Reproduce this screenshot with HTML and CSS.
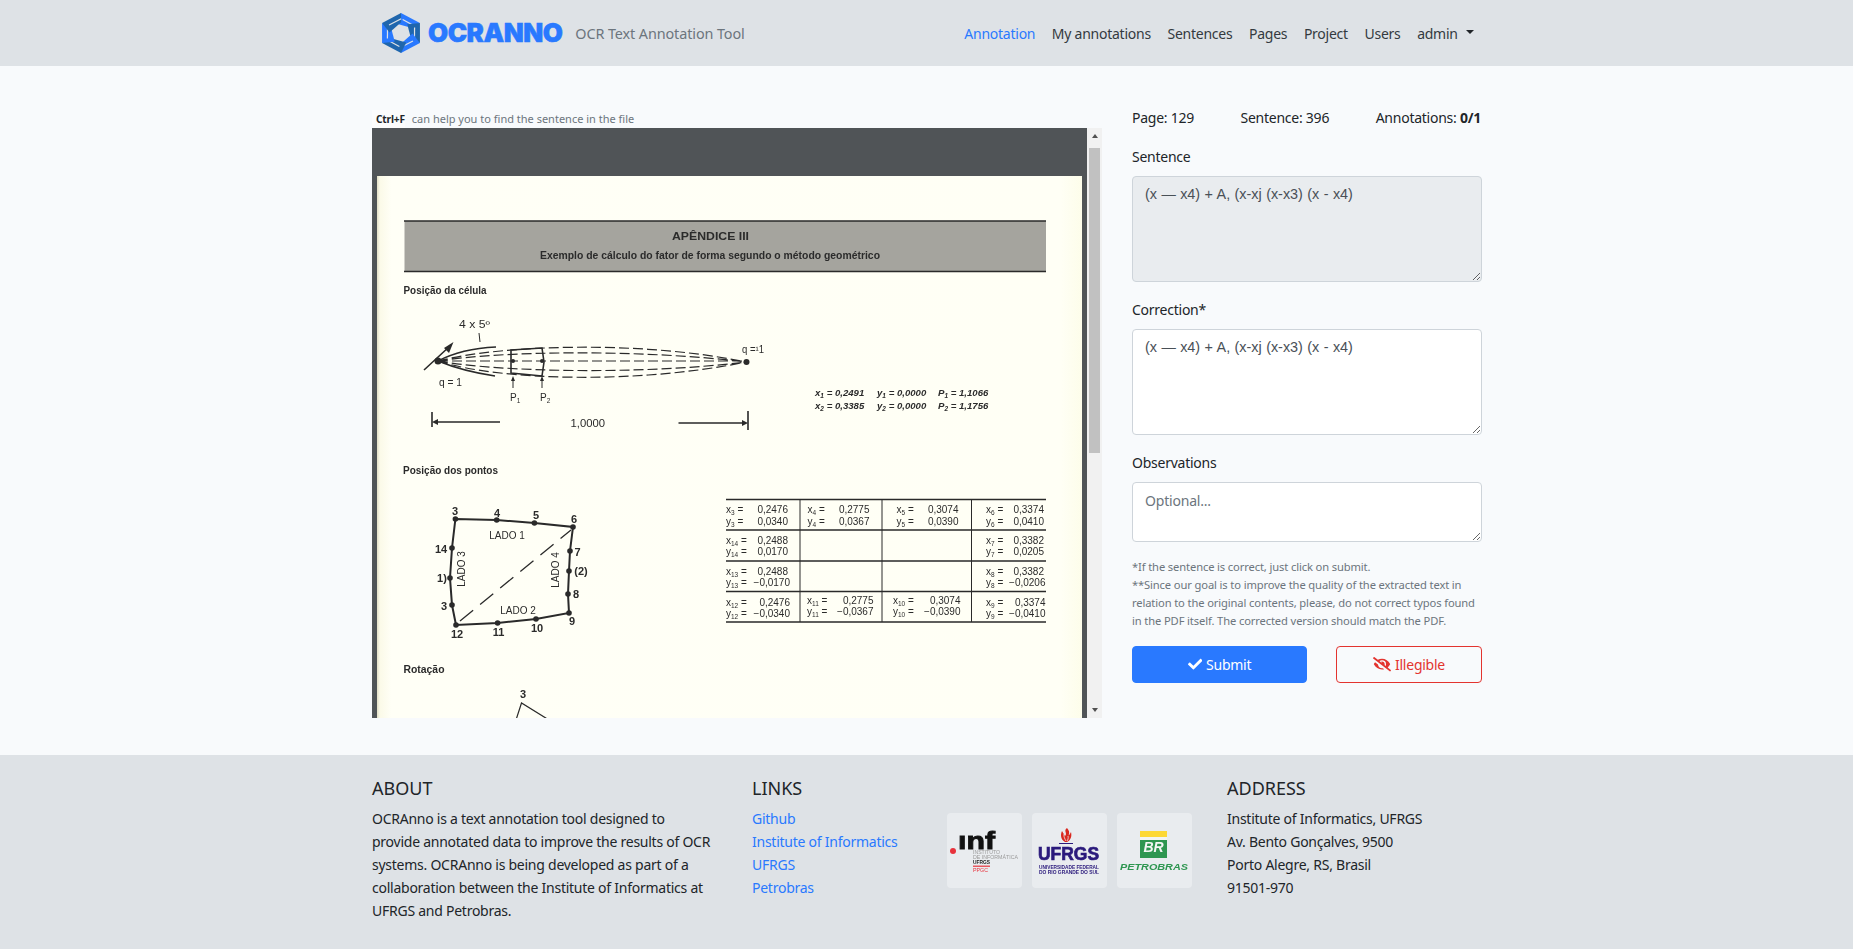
FILE: index.html
```html
<!DOCTYPE html>
<html lang="en">
<head>
<meta charset="utf-8">
<title>OCRAnno</title>
<link rel="stylesheet" href="styles.css">
</head>
<body>
<header class="topbar">
  <div class="wrap topbar-row">
    <a class="brand">
      <svg class="brand-mark" viewBox="-17.400 -20 34.800 40" preserveAspectRatio="none" aria-hidden="true">
        <g><path class="hex-light" d="M0 -20L17.320 -10L9.300 -5.200L-4.800 -9.400Z"/><path class="hex-slit" d="M12.500 -7L1.500 -13.500"/></g>
        <g transform="rotate(60)"><path class="hex-dark" d="M0 -20L17.320 -10L9.300 -5.200L-4.800 -9.400Z"/><path class="hex-slit" d="M12.500 -7L1.500 -13.500"/></g>
        <g transform="rotate(120)"><path class="hex-light" d="M0 -20L17.320 -10L9.300 -5.200L-4.800 -9.400Z"/><path class="hex-slit" d="M12.500 -7L1.500 -13.500"/></g>
        <g transform="rotate(180)"><path class="hex-dark" d="M0 -20L17.320 -10L9.300 -5.200L-4.800 -9.400Z"/><path class="hex-slit" d="M12.500 -7L1.500 -13.500"/></g>
        <g transform="rotate(240)"><path class="hex-light" d="M0 -20L17.320 -10L9.300 -5.200L-4.800 -9.400Z"/><path class="hex-slit" d="M12.500 -7L1.500 -13.500"/></g>
        <g transform="rotate(300)"><path class="hex-dark" d="M0 -20L17.320 -10L9.300 -5.200L-4.800 -9.400Z"/><path class="hex-slit" d="M12.500 -7L1.500 -13.500"/></g>
      </svg>
      <span class="brand-word">OCRANNO</span>
    </a>
    <span class="tagline">OCR Text Annotation Tool</span>
    <nav class="nav">
      <a class="nav-link active">Annotation</a>
      <a class="nav-link">My annotations</a>
      <a class="nav-link">Sentences</a>
      <a class="nav-link">Pages</a>
      <a class="nav-link">Project</a>
      <a class="nav-link">Users</a>
      <a class="nav-link">admin<span class="caret"></span></a>
    </nav>
  </div>
</header>

<main class="wrap layout">
  <section class="doc">
    <p class="doc-hint"><kbd class="key">Ctrl+F</kbd><span>can help you to find the sentence in the file</span></p>
    <div class="viewer">
      <svg class="page" viewBox="372 128 715 590" aria-label="PDF page">
        <defs>
          <linearGradient id="edge" x1="0" x2="1" y1="0" y2="0">
            <stop offset="0" stop-color="#e2dfc6"/>
            <stop offset="0.004" stop-color="#fbfae8"/>
            <stop offset="0.02" stop-color="#fffff6"/>
            <stop offset="0.97" stop-color="#fffff5"/>
            <stop offset="1" stop-color="#fdfdea"/>
          </linearGradient>
        </defs>
        <rect class="sheet" x="377" y="176" width="705" height="542"/>
        <g class="scan">
          <rect class="band" x="404.500" y="221" width="641.500" height="51"/>
          <path class="rule" d="M404 221H1046M404 271.500H1046"/>
          <text class="b" x="672" y="240" textLength="77" lengthAdjust="spacingAndGlyphs">APÊNDICE  III</text>
          <text class="b" x="540" y="258.500" textLength="340" lengthAdjust="spacingAndGlyphs">Exemplo de cálculo do fator de forma segundo o método geométrico</text>
          <text class="b" x="403.500" y="293.500" textLength="83" lengthAdjust="spacingAndGlyphs">Posição da célula</text>

          <text class="t" x="459" y="328" textLength="31" lengthAdjust="spacingAndGlyphs">4 x 5º</text>
          <path class="thin" d="M479 333L480 342"/>
          <path class="solid" d="M424 370L450 346M438 361C455 352 475 348 496 347M438 361C455 368 475 373 495 376"/>
          <path class="arrowhead" d="M453.500 342L444 348L449 353Z"/>
          <path class="dash" d="M438 361C500 345 640 340 746 362M438 361C500 351 640 349 746 362M438 361H746M438 361C500 372 640 375 746 362M438 361C500 381 640 384 746 362"/>
          <path class="solid" d="M511 350L542 348L544 362L542 376L511 373Z"/>
          <circle class="dot" cx="513" cy="361" r="2"/><circle class="dot" cx="542" cy="361" r="2"/><circle class="dot" cx="746.500" cy="362" r="3"/><circle class="dot" cx="438" cy="361" r="3.500"/>
          <text class="t" x="439" y="386" textLength="23" lengthAdjust="spacingAndGlyphs">q = 1</text>
          <text class="t" x="742" y="353" textLength="22" lengthAdjust="spacingAndGlyphs">q =¹1</text>
          <path class="thin" d="M513 388V379M542 388V379"/>
          <path class="arrowhead" d="M513 376L511 381H515ZM542 376L540 381H544Z"/>
          <text class="t" x="510" y="401">P<tspan class="sub" dy="2">1</tspan></text>
          <text class="t" x="540" y="401">P<tspan class="sub" dy="2">2</tspan></text>
          <path class="solid" d="M432 412V427M434 422H500M678.500 423H746M748 411V430"/>
          <path class="arrowhead" d="M432 422L438 419V425ZM748 423L742 420V426Z"/>
          <text class="t" x="570.500" y="427" textLength="34.500" lengthAdjust="spacingAndGlyphs">1,0000</text>
          <text class="i" x="815" y="395.500">x<tspan class="sub" dy="2">1</tspan><tspan dy="-2"> = 0,2491</tspan></text>
          <text class="i" x="877" y="395.500">y<tspan class="sub" dy="2">1</tspan><tspan dy="-2"> = 0,0000</tspan></text>
          <text class="i" x="938" y="395.500">P<tspan class="sub" dy="2">1</tspan><tspan dy="-2"> = 1,1066</tspan></text>
          <text class="i" x="815" y="408.500">x<tspan class="sub" dy="2">2</tspan><tspan dy="-2"> = 0,3385</tspan></text>
          <text class="i" x="877" y="408.500">y<tspan class="sub" dy="2">2</tspan><tspan dy="-2"> = 0,0000</tspan></text>
          <text class="i" x="938" y="408.500">P<tspan class="sub" dy="2">2</tspan><tspan dy="-2"> = 1,1756</tspan></text>

          <text class="b" x="403" y="473.500" textLength="95" lengthAdjust="spacingAndGlyphs">Posição dos pontos</text>
          <path class="solid poly" d="M455.400 519L496.700 520L534.400 523L573 527L570 551L569 571L568 594L569 613L536 619L497.600 623L456 625L452 605L450 578L452 548Z"/>
          <path class="dash long" d="M460 621L571 530"/>
          <g class="dots">
            <circle class="dot" cx="455.400" cy="519" r="2.800"/><circle class="dot" cx="496.700" cy="520" r="2.800"/><circle class="dot" cx="534.400" cy="523" r="2.800"/><circle class="dot" cx="573" cy="527" r="2.800"/><circle class="dot" cx="570" cy="551" r="2.800"/><circle class="dot" cx="569" cy="571" r="2.800"/><circle class="dot" cx="568" cy="594" r="2.800"/><circle class="dot" cx="569" cy="613" r="2.800"/><circle class="dot" cx="536" cy="619" r="2.800"/><circle class="dot" cx="497.600" cy="623" r="2.800"/><circle class="dot" cx="456" cy="625" r="2.800"/><circle class="dot" cx="452" cy="605" r="2.800"/><circle class="dot" cx="450" cy="578" r="2.800"/><circle class="dot" cx="452" cy="548" r="2.800"/>
          </g>
          <text class="n" x="455" y="515">3</text><text class="n" x="497" y="517">4</text><text class="n" x="536" y="519">5</text><text class="n" x="574" y="523">6</text><text class="n" x="577.500" y="556">7</text><text class="n" x="581" y="575">(2)</text><text class="n" x="576" y="598">8</text><text class="n" x="572" y="625">9</text><text class="n" x="537" y="632">10</text><text class="n" x="498.600" y="636">11</text><text class="n" x="457" y="638">12</text><text class="n" x="444" y="610">3</text><text class="n" x="442" y="582">1)</text><text class="n" x="441" y="553">14</text>
          <text class="l" x="507" y="539">LADO 1</text>
          <text class="l" x="518" y="614">LADO 2</text>
          <text class="l" transform="rotate(-90 465 569)" x="465" y="569">LADO 3</text>
          <text class="l" transform="rotate(-90 559 570)" x="559" y="570">LADO 4</text>

          <path class="rule" d="M726 499.500H1046M726 530H1046M726 561H1046M726 591.500H1046M726 622H1046"/>
          <path class="thin" d="M800 499.500V622M882 499.500V622M971.500 499.500V622"/>
          <g class="cells">
            <text x="726" y="512.500">x<tspan class="sub" dy="2">3</tspan><tspan dy="-2"> =</tspan></text><text class="v" x="788" y="512.500">0,2476</text>
            <text x="726" y="524.500">y<tspan class="sub" dy="2">3</tspan><tspan dy="-2"> =</tspan></text><text class="v" x="788" y="524.500">0,0340</text>
            <text x="807.500" y="512.500">x<tspan class="sub" dy="2">4</tspan><tspan dy="-2"> =</tspan></text><text class="v" x="869.500" y="512.500">0,2775</text>
            <text x="807.500" y="524.500">y<tspan class="sub" dy="2">4</tspan><tspan dy="-2"> =</tspan></text><text class="v" x="869.500" y="524.500">0,0367</text>
            <text x="896.500" y="512.500">x<tspan class="sub" dy="2">5</tspan><tspan dy="-2"> =</tspan></text><text class="v" x="958.500" y="512.500">0,3074</text>
            <text x="896.500" y="524.500">y<tspan class="sub" dy="2">5</tspan><tspan dy="-2"> =</tspan></text><text class="v" x="958.500" y="524.500">0,0390</text>
            <text x="986" y="512.500">x<tspan class="sub" dy="2">6</tspan><tspan dy="-2"> =</tspan></text><text class="v" x="1044" y="512.500">0,3374</text>
            <text x="986" y="524.500">y<tspan class="sub" dy="2">6</tspan><tspan dy="-2"> =</tspan></text><text class="v" x="1044" y="524.500">0,0410</text>

            <text x="726" y="543.500">x<tspan class="sub" dy="2">14</tspan><tspan dy="-2"> =</tspan></text><text class="v" x="788" y="543.500">0,2488</text>
            <text x="726" y="555">y<tspan class="sub" dy="2">14</tspan><tspan dy="-2"> =</tspan></text><text class="v" x="788" y="555">0,0170</text>
            <text x="986" y="543.500">x<tspan class="sub" dy="2">7</tspan><tspan dy="-2"> =</tspan></text><text class="v" x="1044" y="543.500">0,3382</text>
            <text x="986" y="555">y<tspan class="sub" dy="2">7</tspan><tspan dy="-2"> =</tspan></text><text class="v" x="1044" y="555">0,0205</text>

            <text x="726" y="574.500">x<tspan class="sub" dy="2">13</tspan><tspan dy="-2"> =</tspan></text><text class="v" x="788" y="574.500">0,2488</text>
            <text x="726" y="586">y<tspan class="sub" dy="2">13</tspan><tspan dy="-2"> =</tspan></text><text class="v" x="790" y="586">−0,0170</text>
            <text x="986" y="574.500">x<tspan class="sub" dy="2">8</tspan><tspan dy="-2"> =</tspan></text><text class="v" x="1044" y="574.500">0,3382</text>
            <text x="986" y="586">y<tspan class="sub" dy="2">8</tspan><tspan dy="-2"> =</tspan></text><text class="v" x="1045.500" y="586">−0,0206</text>

            <text x="726" y="605.500">x<tspan class="sub" dy="2">12</tspan><tspan dy="-2"> =</tspan></text><text class="v" x="790" y="605.500">0,2476</text>
            <text x="726" y="617">y<tspan class="sub" dy="2">12</tspan><tspan dy="-2"> =</tspan></text><text class="v" x="790" y="617">−0,0340</text>
            <text x="807" y="603.500">x<tspan class="sub" dy="2">11</tspan><tspan dy="-2"> =</tspan></text><text class="v" x="873.500" y="603.500">0,2775</text>
            <text x="807" y="615">y<tspan class="sub" dy="2">11</tspan><tspan dy="-2"> =</tspan></text><text class="v" x="873.500" y="615">−0,0367</text>
            <text x="893" y="603.500">x<tspan class="sub" dy="2">10</tspan><tspan dy="-2"> =</tspan></text><text class="v" x="960.500" y="603.500">0,3074</text>
            <text x="893" y="615">y<tspan class="sub" dy="2">10</tspan><tspan dy="-2"> =</tspan></text><text class="v" x="960.500" y="615">−0,0390</text>
            <text x="986" y="605.500">x<tspan class="sub" dy="2">9</tspan><tspan dy="-2"> =</tspan></text><text class="v" x="1045.500" y="605.500">0,3374</text>
            <text x="986" y="617">y<tspan class="sub" dy="2">9</tspan><tspan dy="-2"> =</tspan></text><text class="v" x="1045.500" y="617">−0,0410</text>
          </g>

          <text class="b" x="403.500" y="672.500" textLength="41" lengthAdjust="spacingAndGlyphs">Rotação</text>
          <text class="n" x="523" y="698">3</text>
          <path class="thin wide" d="M516 720L521.500 703L549 720"/>
        </g>
      </svg>
      <div class="scrollbar" aria-hidden="true">
        <span class="sb-up"></span>
        <span class="sb-thumb"></span>
        <span class="sb-down"></span>
      </div>
    </div>
  </section>

  <aside class="panel">
    <div class="stats">
      <span>Page: 129</span>
      <span>Sentence: 396</span>
      <span>Annotations: <b>0/1</b></span>
    </div>
    <div class="field">
      <label class="label">Sentence</label>
      <textarea class="input tall" readonly>(x — x4) + A, (x-xj (x-x3) (x - x4)</textarea>
    </div>
    <div class="field">
      <label class="label">Correction*</label>
      <textarea class="input tall">(x — x4) + A, (x-xj (x-x3) (x - x4)</textarea>
    </div>
    <div class="field">
      <label class="label">Observations</label>
      <textarea class="input short" placeholder="Optional..."></textarea>
    </div>
    <p class="help">*If the sentence is correct, just click on submit.<br>**Since our goal is to improve the quality of the extracted text in relation to the original contents, please, do not correct typos found in the PDF itself. The corrected version should match the PDF.</p>
    <div class="actions">
      <button class="btn btn-primary" type="button">
        <svg class="ico" viewBox="0 0 512 512" aria-hidden="true"><path d="M173.898 439.404l-166.4-166.4c-9.997-9.997-9.997-26.206 0-36.204l36.203-36.204c9.997-9.998 26.207-9.998 36.204 0L192 312.69 432.095 72.596c9.997-9.997 26.207-9.997 36.204 0l36.203 36.204c9.997 9.997 9.997 26.206 0 36.204l-294.4 294.401c-9.998 9.997-26.207 9.997-36.204-.001z"/></svg>
        Submit
      </button>
      <button class="btn btn-danger" type="button">
        <svg class="ico ico-wide" viewBox="0 0 640 512" aria-hidden="true"><path d="M320 400c-75.85 0-137.25-58.71-142.9-133.11L72.2 185.82c-13.79 17.3-26.48 35.59-36.72 55.59a32.35 32.35 0 0 0 0 29.19C89.71 376.41 197.07 448 320 448c26.91 0 52.87-4 77.89-10.46L346 397.39a144.13 144.13 0 0 1-26 2.61zm313.82 58.1l-110.55-85.44a331.25 331.25 0 0 0 81.25-102.07 32.35 32.35 0 0 0 0-29.19C550.29 135.59 442.93 64 320 64a308.15 308.15 0 0 0-147.32 37.7L45.46 3.37A16 16 0 0 0 23 6.18L3.37 31.45A16 16 0 0 0 6.18 53.9l588.36 454.73a16 16 0 0 0 22.46-2.81l19.64-25.27a16 16 0 0 0-2.82-22.45zm-183.72-142l-39.3-30.38A94.75 94.75 0 0 0 416 256a94.76 94.76 0 0 0-121.31-92.21A47.65 47.65 0 0 1 304 192a46.64 46.64 0 0 1-1.54 10l-73.61-56.89A142.31 142.31 0 0 1 320 112a143.92 143.92 0 0 1 144 144c0 21.63-5.29 41.79-13.9 60.11z"/></svg>
        Illegible
      </button>
    </div>
  </aside>
</main>

<footer class="footer">
  <div class="wrap footer-grid">
    <div>
      <h5 class="footer-title">ABOUT</h5>
      <p class="footer-text">OCRAnno is a text annotation tool designed to provide annotated data to improve the results of OCR systems. OCRAnno is being developed as part of a collaboration between the Institute of Informatics at UFRGS and Petrobras.</p>
    </div>
    <div>
      <h5 class="footer-title">LINKS</h5>
      <ul class="footer-links">
        <li><a>Github</a></li>
        <li><a>Institute of Informatics</a></li>
        <li><a>UFRGS</a></li>
        <li><a>Petrobras</a></li>
      </ul>
    </div>
    <div class="logos">
      <svg class="logo" viewBox="0 0 75 75" aria-label="Instituto de Informática UFRGS">
        <circle class="inf-dot" cx="6" cy="38" r="3"/>
        <text class="inf-mark" x="11" y="36" textLength="37" lengthAdjust="spacingAndGlyphs">ınf</text>
        <text class="inf-small" x="26" y="41" textLength="27" lengthAdjust="spacingAndGlyphs">INSTITUTO</text>
        <text class="inf-small" x="26" y="46" textLength="45" lengthAdjust="spacingAndGlyphs">DE INFORMÁTICA</text>
        <text class="inf-small dark" x="26" y="51" textLength="17" lengthAdjust="spacingAndGlyphs">UFRGS</text>
        <rect class="inf-line" x="26" y="52.600" width="17" height="1.200"/>
        <text class="inf-small red" x="26" y="59" textLength="15" lengthAdjust="spacingAndGlyphs">PPGC</text>
      </svg>
      <svg class="logo" viewBox="0 0 75 75" aria-label="UFRGS">
        <path class="flame" d="M35 15C31 18 36 20 33 23C32 21 31 20 30 18C28 22 29 27 33 29H35C39 27 40 23 39 19C38 21 37.500 22 36.500 22.500C38 20 37 17 35 15Z"/>
        <path class="flame-cut" d="M32 21C31.500 24 33 26 34 28M36 23C36.500 25 36 27 35 28"/>
        <path class="ufrgs-base" d="M27 30.500H41"/>
        <text class="ufrgs-mark" x="6" y="47" textLength="61" lengthAdjust="spacingAndGlyphs">UFRGS</text>
        <text class="ufrgs-small" x="7" y="55.500" textLength="60" lengthAdjust="spacingAndGlyphs">UNIVERSIDADE FEDERAL</text>
        <text class="ufrgs-small" x="7" y="60.500" textLength="60" lengthAdjust="spacingAndGlyphs">DO RIO GRANDE DO SUL</text>
      </svg>
      <svg class="logo" viewBox="0 0 75 75" aria-label="Petrobras">
        <rect class="br-yellow" x="23" y="18" width="27" height="6"/>
        <rect class="br-white" x="23" y="24" width="27" height="3"/>
        <rect class="br-green" x="23" y="27" width="27" height="18"/>
        <text class="br-text" x="36.500" y="38.500">BR</text>
        <text class="br-name" x="3" y="57" textLength="68" lengthAdjust="spacingAndGlyphs">PETROBRAS</text>
      </svg>
    </div>
    <div>
      <h5 class="footer-title">ADDRESS</h5>
      <ul class="footer-links plain">
        <li>Institute of Informatics, UFRGS</li>
        <li>Av. Bento Gonçalves, 9500</li>
        <li>Porto Alegre, RS, Brasil</li>
        <li>91501-970</li>
      </ul>
    </div>
  </div>
</footer>
</body>
</html>
```

FILE: styles.css
```css
* { box-sizing: border-box; }

html, body { margin: 0; padding: 0; }

body {
  background: #f8fafc;
  color: #212529;
  font-family: "Noto Sans", "Open Sans", sans-serif;
  font-size: 14px;
  line-height: 23px;
  letter-spacing: -0.25px;
  height: 949px;
  overflow: hidden;
}

.wrap { width: 1110px; margin-left: 372px; }

/* top bar */
.topbar { background: #dee2e6; height: 66px; }
.topbar-row { display: flex; align-items: center; height: 66px; padding-left: 10px; }
.brand { display: flex; align-items: center; gap: 8px; }
.brand-mark { width: 38px; height: 40px; display: block; }
.hex-dark { fill: #1f66ad; }
.hex-light { fill: #2979ff; }
.hex-slit { stroke: #dee2e6; stroke-width: 1.100; fill: none; }
.brand-word {
  color: #2979ff;
  font-family: Inter, "Liberation Sans", sans-serif;
  font-weight: 900;
  font-size: 26px;
  letter-spacing: -0.5px;
  line-height: 30px;
  -webkit-text-stroke: 0.5px #2979ff;
}
.tagline { color: #6c757d; font-size: 14.400px; letter-spacing: -0.1px; margin-left: 13px; }
.nav { display: flex; margin-left: auto; }
.nav-link { color: #343a40; padding: 0 8.300px; display: flex; align-items: center; }
.nav-link.active { color: #2979ff; }
.caret {
  width: 0; height: 0;
  margin-left: 8px;
  margin-bottom: 3px;
  border-top: 4.300px solid #212529;
  border-left: 4.300px solid transparent;
  border-right: 4.300px solid transparent;
}

/* main */
.layout {
  display: grid;
  grid-template-columns: 730px 350px;
  column-gap: 30px;
  padding-top: 40px;
  height: 689px;
}
.doc { display: flex; flex-direction: column; }
.doc-hint {
  margin: 0;
  height: 22px;
  display: flex;
  align-items: flex-end;
  gap: 7px;
  color: #6c757d;
  font-size: 11px;
  letter-spacing: 0;
  line-height: 18px;
}
.key {
  background: #fcfcfc;
  color: #212529;
  font-family: "Noto Sans", sans-serif;
  font-size: 10.200px;
  font-weight: 700;
  padding: 0 0 0 4px;
  letter-spacing: -0.2px;
}
.viewer { display: flex; height: 590px; background: #505457; }
.page { width: 715px; height: 590px; display: block; flex: none; }
.sheet { fill: url(#edge); }
.scan { filter: blur(0.3px); }
.scan text { font-family: "Liberation Sans", Arial, sans-serif; fill: #2b2b2b; letter-spacing: 0; }
.band { fill: #a5a49e; }
.rule { stroke: #2a2a2a; stroke-width: 1.300; fill: none; }
.thin { stroke: #2a2a2a; stroke-width: 1; fill: none; }
.thin.wide { stroke-width: 1.200; }
.solid { stroke: #2a2a2a; stroke-width: 1.600; fill: none; }
.solid.poly { stroke-width: 2; }
.dash { stroke: #2a2a2a; stroke-width: 1.200; fill: none; stroke-dasharray: 10 4; }
.dash.long { stroke-dasharray: 17 9; stroke-width: 1.300; }
.dot, .arrowhead { fill: #2a2a2a; }
.scan .b { font-size: 10.500px; font-weight: 700; }
.scan .t { font-size: 10px; }
.scan .i { font-size: 9.600px; font-style: italic; font-weight: 700; }
.scan .n { font-size: 11px; font-weight: 700; text-anchor: middle; }
.scan .l { font-size: 10px; text-anchor: middle; }
.cells text { font-size: 10px; }
.scan .cells .v { text-anchor: end; }
.sub { font-size: 6.500px; }

.scrollbar {
  flex: none;
  width: 15px;
  background: #f1f1f1;
  display: flex;
  flex-direction: column;
  align-items: center;
  justify-content: space-between;
  padding: 0 0 6px;
}
.sb-up, .sb-down {
  width: 0; height: 0;
  border-left: 3.500px solid transparent;
  border-right: 3.500px solid transparent;
}
.sb-up { border-bottom: 4px solid #505050; margin-top: 6px; }
.sb-down { border-top: 4px solid #505050; }
.sb-thumb {
  width: 11px;
  height: 305px;
  background: #c1c1c1;
  margin-top: 10px;
  margin-bottom: auto;
}

/* panel */
.panel { display: flex; flex-direction: column; }
.stats { display: flex; justify-content: space-between; margin-bottom: 16px; padding-right: 1px; }
.field { margin-bottom: 16px; }
.label { display: block; margin-bottom: 8px; }
.input {
  display: block;
  width: 100%;
  border: 1px solid #ced4da;
  border-radius: 4px;
  background: #fff;
  color: #495057;
  font-family: "Liberation Sans", Arial, sans-serif;
  font-size: 14.400px;
  letter-spacing: 0;
  word-spacing: 0.4px;
  line-height: 23px;
  padding: 5.500px 12px;
  outline: none;
}
.input[readonly] { background: #e9ecef; }
.input::placeholder { color: #6c757d; font-family: "Noto Sans", sans-serif; font-size: 14px; letter-spacing: -0.2px; }
.tall { height: 106px; }
.short { height: 60px; }
.help {
  margin: 0 0 16px;
  color: #6c757d;
  font-size: 11.200px;
  line-height: 18px;
  letter-spacing: -0.13px;
}
.actions { display: flex; justify-content: space-between; }
.btn {
  height: 37px;
  border-radius: 4px;
  font: inherit;
  letter-spacing: inherit;
  display: flex;
  align-items: center;
  justify-content: center;
  gap: 4px;
}
.btn-primary { width: 175px; background: #2979ff; border: 1px solid #2979ff; color: #fff; }
.btn-danger { width: 146px; background: transparent; border: 1px solid #e3342f; color: #e3342f; }
.ico { width: 14.400px; height: 14.400px; fill: currentColor; display: block; }
.ico-wide { width: 18px; }

/* footer */
.footer { background: #dee2e6; height: 194px; padding-top: 21px; }
.footer-grid { display: grid; grid-template-columns: 380px 195px 280px 255px; }
.footer-title { font-size: 18px; font-weight: 400; line-height: 24px; margin: 0 0 7px; letter-spacing: 0; }
.footer-text { margin: 0; width: 342px; }
.footer-links { list-style: none; margin: 0; padding: 0; }
.footer-links a { color: #2979ff; }
.logos { display: flex; gap: 10px; padding-top: 37px; }
.logo { width: 75px; height: 75px; background: #e9ecef; border-radius: 4px; display: block; filter: blur(0.35px); letter-spacing: 0; }
.inf-dot { fill: #e8323c; }
.inf-mark { font-family: "Liberation Sans", sans-serif; font-weight: 700; font-size: 23px; fill: #111; stroke: #111; stroke-width: 0.800; }
.inf-small { font-family: "Liberation Sans", sans-serif; font-size: 4.600px; fill: #9a9a9a; }
.inf-small.dark { fill: #222; font-weight: 700; }
.inf-small.red { fill: #e8323c; }
.inf-line { fill: #e8323c; }
.flame { fill: #d9281f; }
.flame-cut { stroke: #e9ecef; stroke-width: 0.800; fill: none; }
.ufrgs-base { stroke: #2b1a7c; stroke-width: 1; fill: none; }
.ufrgs-mark { font-family: "Liberation Sans", sans-serif; font-weight: 700; font-size: 18px; fill: #2b1a7c; stroke: #2b1a7c; stroke-width: 0.700; }
.ufrgs-small { font-family: "Liberation Sans", sans-serif; font-weight: 700; font-size: 5px; fill: #2b1a7c; }
.br-yellow { fill: #fdd835; }
.br-green { fill: #2e9650; }
.br-white { fill: #f2f4f2; }
.br-text { font-family: "Liberation Sans", sans-serif; font-weight: 700; font-style: italic; font-size: 14px; fill: #f4f6f4; text-anchor: middle; }
.br-name { font-family: "Liberation Sans", sans-serif; font-weight: 700; font-style: italic; font-size: 9px; fill: #2e9650; }
```
